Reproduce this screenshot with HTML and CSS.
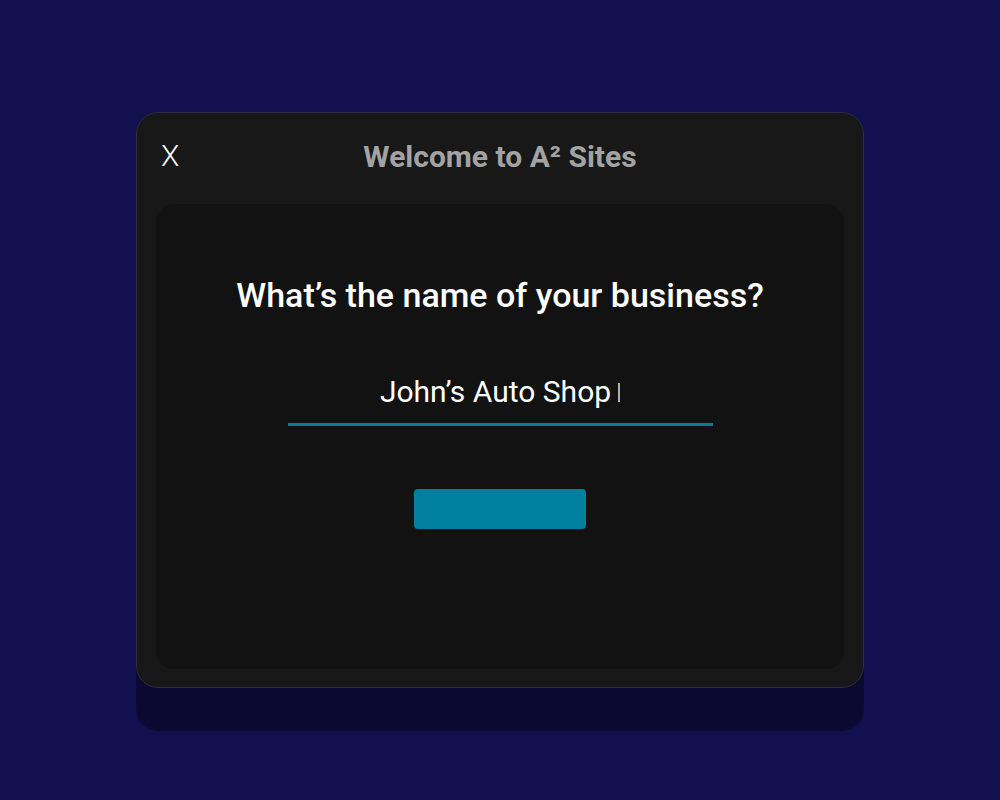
FILE: index.html
```html
<!DOCTYPE html>
<html lang="en">
<head>
<meta charset="utf-8">
<title>Welcome to A² Sites</title>
<link rel="stylesheet" href="styles.css">
</head>
<body>
<div class="stage">
  <div class="modal">
    <div class="modal-header">
      <button class="close" type="button" aria-label="Close">X</button>
      <h1 class="title">Welcome to A² Sites</h1>
    </div>
    <div class="panel">
      <h2 class="question">What’s the name of your business?</h2>
      <div class="field">
        <span class="value">John’s Auto Shop</span><span class="caret"></span>
      </div>
      <button class="next" type="button"></button>
    </div>
  </div>
</div>
</body>
</html>
```
FILE: styles.css
```css
html, body {
  margin: 0;
  padding: 0;
  height: 100%;
}
body {
  background: #13104f;
  font-family: Roboto, "Liberation Sans", sans-serif;
}
.stage {
  display: flex;
  justify-content: center;
  padding-top: 112px;
}
.modal {
  width: 728px;
  height: 576px;
  box-sizing: border-box;
  background: #181818;
  border: 1px solid #2c2b44;
  border-radius: 22px;
  box-shadow: 0 43px 1px rgba(0, 0, 0, 0.38);
  padding: 0 19px 18px;
  display: flex;
  flex-direction: column;
}
.modal-header {
  height: 91px;
  display: flex;
  align-items: center;
  justify-content: center;
  position: relative;
}
.close {
  position: absolute;
  left: 5px;
  top: 24px;
  background: none;
  border: 0;
  padding: 0;
  color: #ffffff;
  font-family: Roboto, sans-serif;
  font-weight: 300;
  font-size: 30px;
  line-height: 38px;
}
.title {
  margin: 0;
  color: #a3a3a3;
  font-weight: 700;
  font-size: 30px;
  line-height: 38px;
  margin-top: -3px;
}
.panel {
  flex: 1;
  background: #121212;
  border-radius: 18px;
  display: flex;
  flex-direction: column;
  align-items: center;
  padding-top: 71px;
}
.question {
  margin: 0;
  color: #ffffff;
  font-weight: 500;
  font-size: 34px;
  line-height: 40px;
}
.field {
  margin-top: 56px;
  width: 425px;
  border-bottom: 3px solid #0b7a94;
  text-align: center;
  padding-bottom: 12px;
  line-height: 38px;
  font-size: 30px;
  color: #ffffff;
}
.value {
  font-weight: 400;
  vertical-align: -2px;
}
.caret {
  display: inline-block;
  width: 2px;
  height: 19px;
  background: #b0b0b0;
  margin-left: 7px;
  vertical-align: -2px;
}
.next {
  margin-top: 63px;
  width: 172px;
  height: 40px;
  border: 0;
  border-radius: 4px;
  background: #00809e;
}
```
